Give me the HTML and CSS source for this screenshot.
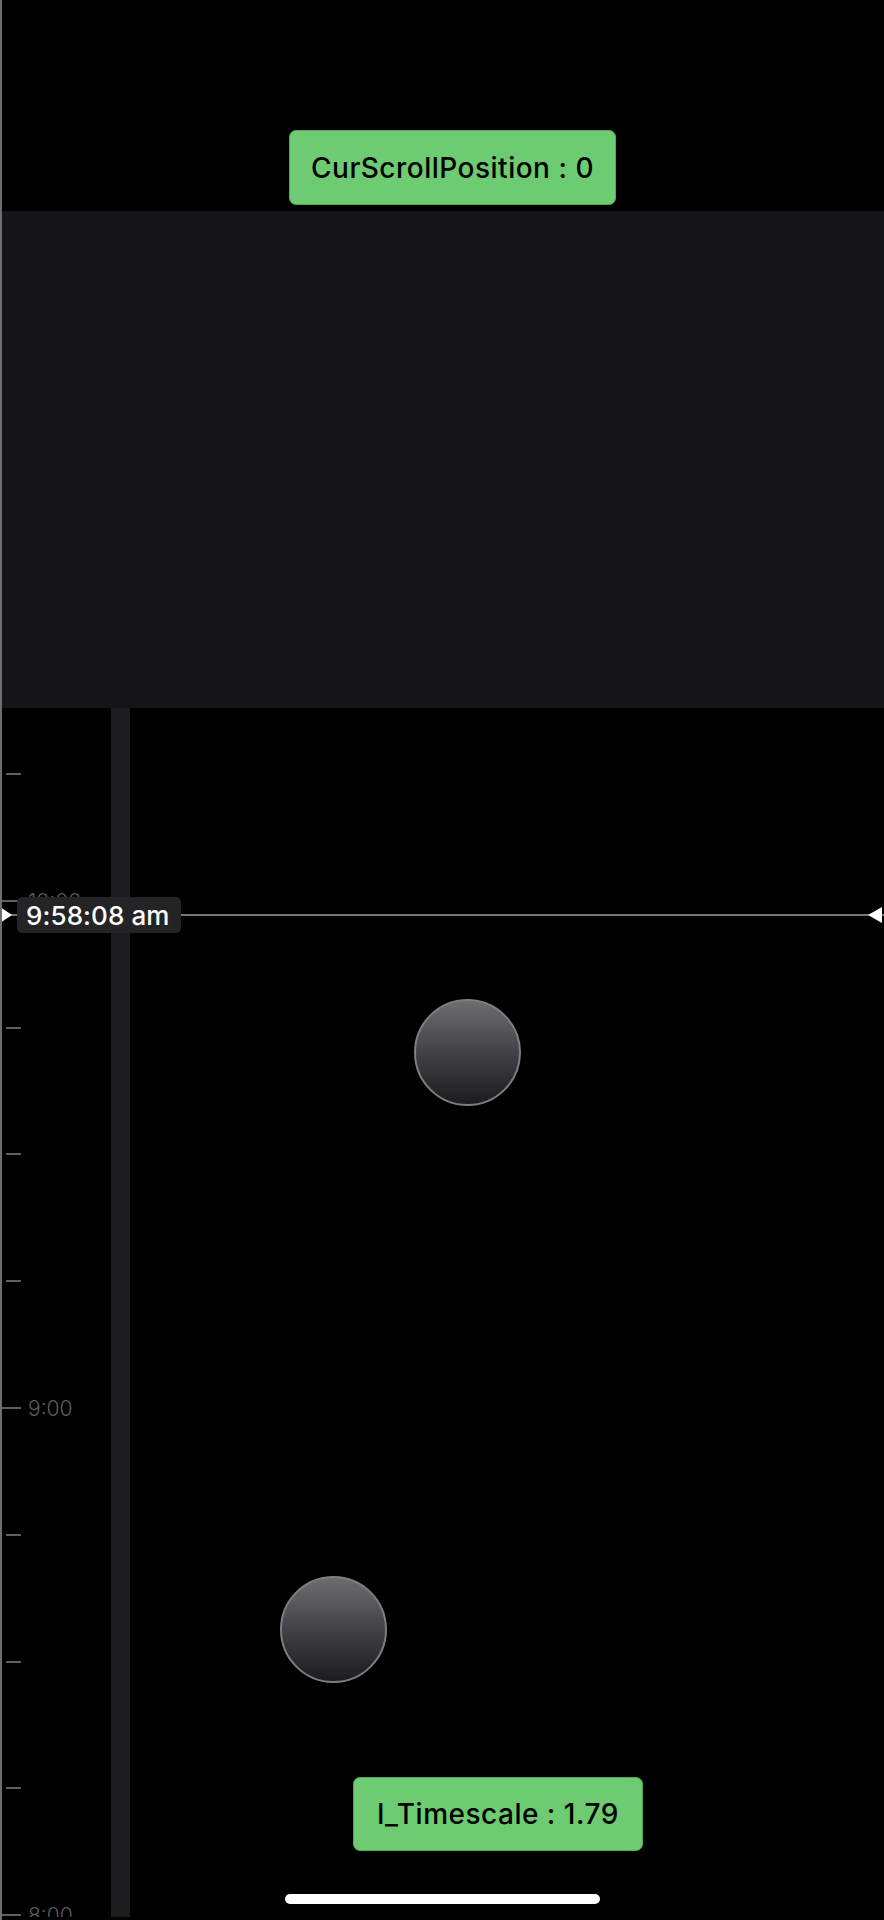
FILE: index.html
```html
<!DOCTYPE html>
<html lang="en">
<head>
    <meta charset="UTF-8">
    <meta name="viewport" content="width=device-width, initial-scale=1.0">
    <title>Timeline</title>
    <link rel="stylesheet" href="styles.css">
</head>
<body>
    <div class="screen">
        <!-- Header with scroll debug value -->
        <div class="header">
            <div class="debug-box">CurScrollPosition : 0</div>
        </div>

        <!-- Empty panel above the timeline -->
        <div class="panel"></div>

        <!-- Timeline -->
        <div class="timeline">
            <div class="ruler">
                <div class="tick" style="top: 66px"></div>
                <div class="tick major" style="top: 193px"><span class="tick-label">10:00</span></div>
                <div class="tick" style="top: 320px"></div>
                <div class="tick" style="top: 446px"></div>
                <div class="tick" style="top: 573px"></div>
                <div class="tick major" style="top: 700px"><span class="tick-label">9:00</span></div>
                <div class="tick" style="top: 827px"></div>
                <div class="tick" style="top: 954px"></div>
                <div class="tick" style="top: 1080px"></div>
                <div class="tick major" style="top: 1207px"><span class="tick-label">8:00</span></div>
            </div>
            <div class="track"></div>
            <div class="canvas"></div>

            <!-- Events -->
            <div class="event" style="left: 412px; top: 291px"></div>
            <div class="event" style="left: 278px; top: 868px"></div>

            <!-- Current time indicator -->
            <div class="now-line" style="top: 206px">
                <span class="arrow arrow-left"></span>
                <span class="arrow arrow-right"></span>
            </div>
            <div class="now-badge" style="top: 189px">9:58:08 am</div>
        </div>

        <div class="debug-box timescale">l_Timescale : 1.79</div>
        <div class="home-indicator"></div>
    </div>
</body>
</html>
```

FILE: styles.css
```css
* {
    margin: 0;
    padding: 0;
    box-sizing: border-box;
}

body {
    background: #000;
    font-family: Inter, Roboto, "Liberation Sans", sans-serif;
    width: 884px;
    height: 1920px;
    overflow: hidden;
}

.screen {
    position: relative;
    height: 1920px;
    border-left: 2px solid #6e6e70;
}

.header {
    height: 211px;
    display: flex;
    align-items: flex-end;
    padding-left: 287px;
    padding-bottom: 6px;
}

.debug-box {
    background: #6dcb71;
    border: 1.5px solid #55a859;
    border-radius: 7px;
    color: #000;
    font-size: 28px;
    font-weight: 500;
    letter-spacing: 0.5px;
    display: flex;
    align-items: center;
    justify-content: center;
    width: 327px;
    height: 75px;
}

.panel {
    height: 497px;
    background: #151418;
}

.timeline {
    position: relative;
    height: 1209px;
    overflow: hidden;
    display: grid;
    grid-template-columns: 109px 19px 1fr;
}

.ruler {
    position: relative;
}

.track {
    background: #1d1d1f;
}

.tick {
    position: absolute;
    left: 4px;
    width: 15px;
    height: 2px;
    margin-top: -1px;
    background: #5f5f61;
}

.tick.major {
    left: 0;
    width: 19px;
}

.tick-label {
    position: absolute;
    left: 26px;
    top: 50%;
    transform: translateY(-50%);
    color: #5c5c5e;
    font-size: 21px;
    font-weight: 300;
    line-height: 1;
}

.event {
    position: absolute;
    width: 107px;
    height: 107px;
    border-radius: 50%;
    background: linear-gradient(180deg, #6d6c70 0%, #3e3d41 55%, #1c1b1e 100%);
    border: 2px solid #7e7e82;
}

.now-line {
    position: absolute;
    left: 0;
    right: 0;
    height: 2px;
    background: #747476;
}

.arrow {
    position: absolute;
    top: -7px;
    width: 0;
    height: 0;
    border-top: 8px solid transparent;
    border-bottom: 8px solid transparent;
}

.arrow-left {
    left: -2px;
    border-left: 12px solid #fff;
}

.arrow-right {
    right: 2px;
    border-right: 14px solid #fff;
}

.now-badge {
    position: absolute;
    left: 15px;
    height: 36px;
    width: 164px;
    padding-left: 9px;
    background: #242427;
    border-radius: 5px;
    color: #fff;
    font-size: 26px;
    font-weight: 500;
    letter-spacing: 0.1px;
    display: flex;
    align-items: center;
}

.timescale {
    position: absolute;
    left: 351px;
    bottom: 69px;
    width: 290px;
    height: 74px;
}

.home-indicator {
    position: absolute;
    left: 283px;
    bottom: 16px;
    width: 315px;
    height: 10px;
    border-radius: 5px;
    background: #fff;
}
```
